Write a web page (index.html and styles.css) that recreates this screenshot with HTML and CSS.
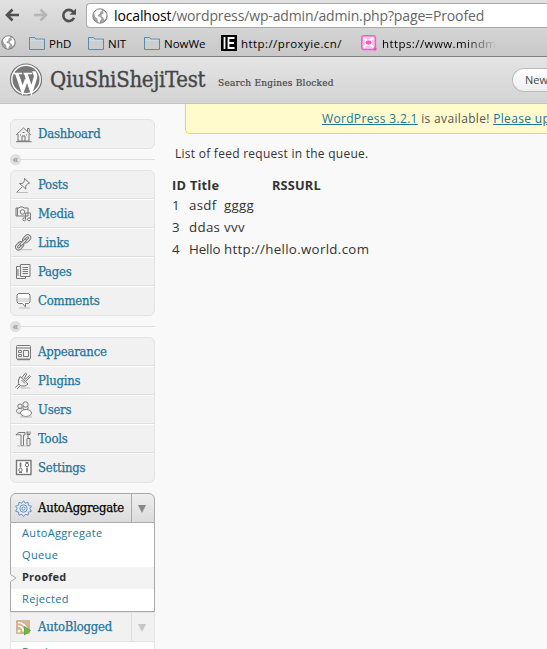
FILE: index.html
```
<!DOCTYPE html>
<html lang="en">
<head>
<meta charset="utf-8">
<title>QiuShiShejiTest</title>
<link rel="stylesheet" href="styles.css">
</head>
<body>
<svg class="defs" aria-hidden="true">
  <defs>
    <linearGradient id="fold" x1="0" y1="0" x2="0" y2="1"><stop offset="0" stop-color="#a9cbe0"/><stop offset="1" stop-color="#6fa3c4"/></linearGradient>
    <symbol id="globe" viewBox="0 0 16 16"><circle cx="8" cy="8" r="7.200" fill="#a4a4a4" stroke="#777" stroke-width=".9"/><path d="M2 5l3-3.200 4-.5 1 1.400-2.300 1.500.5 1.400-2 1.200-.6 1.400 2.300.5 1.700 1.900-1.200 1.600-.9 2.700-1.600-1.200-.4-3-2.200-1.600zM11 3l2 .8 1.500 3-.7 3.700-1.600 1.400-.8-2.400-1.800-1 .2-2.200 1.900-.8z" fill="#fff"/></symbol>
    <symbol id="folder" viewBox="0 0 16 14"><path d="M.5 13.500v-12h5.200l1.200 1.600h8.600v10.400z" fill="url(#fold)" stroke="#5b8cab"/><path d="M1.200 4.300h13.600" stroke="#c7deeb"/></symbol>
  </defs>
</svg>

<header class="browser">
  <div class="toolbar">
    <svg class="nav" width="15" height="14" viewBox="0 0 15 14"><path d="M14 7H2.500M7.500 1.500L2 7l5.500 5.500" fill="none" stroke="#505050" stroke-width="2.700"/></svg>
    <svg class="nav" width="15" height="14" viewBox="0 0 15 14"><path d="M1 7h11.500M7.500 1.500L13 7l-5.500 5.500" fill="none" stroke="#b5b5b5" stroke-width="2.500"/></svg>
    <svg class="nav" width="16" height="15" viewBox="0 0 16 15"><path d="M12.300 4A5.600 5.600 0 1 0 13 9.800" fill="none" stroke="#505050" stroke-width="2.600"/><path d="M15 .5v6.300H8.600z" fill="#505050"/></svg>
    <div class="omnibox"><svg width="16" height="16"><use href="#globe"/></svg><span class="url"><b>localhost</b>/wordpress/wp-admin/admin.php?page=Proofed</span></div>
  </div>
  <nav class="bookmarks">
    <svg class="bm-globe" width="15" height="15"><use href="#globe"/></svg>
    <span class="bm phd"><svg width="16" height="14"><use href="#folder"/></svg><span>PhD</span></span>
    <span class="bm nit"><svg width="16" height="14"><use href="#folder"/></svg><span>NIT</span></span>
    <span class="bm now"><svg width="16" height="14"><use href="#folder"/></svg><span>NowWe</span></span>
    <span class="bm proxy"><svg width="16" height="16" viewBox="0 0 16 16"><path d="M0 0h16v16H0z" fill="#000"/><path d="M3.500 2v12M13.500 3H7.500v10h6M7.500 8h5.500" fill="none" stroke="#fff" stroke-width="1.800"/></svg><span>http://proxyie.cn/</span></span>
    <span class="bm mind"><svg width="16" height="16" viewBox="0 0 16 16"><rect x=".8" y=".8" width="13.600" height="13.600" rx="2" fill="#ffc4ea" stroke="#f55fc0" stroke-width="1.500"/><path d="M2.500 2.500l3 3M12.500 2.500l-3 3M2.500 12.500l3-3M9.500 9.500l3 3" stroke="#fff" stroke-width="2"/><ellipse cx="7.600" cy="7.500" rx="3.500" ry="2.700" fill="#f55fc0" stroke="#fff"/><circle cx="14" cy="14" r="1.700" fill="#f24db8"/></svg><span class="fade">https://www.mindme</span></span>
  </nav>
</header>

<header class="site">
  <svg class="wp" width="34" height="34" viewBox="0 0 34 34"><circle cx="17" cy="16.500" r="15.500" fill="#fff" stroke="#777" stroke-width="1.200"/><circle cx="17" cy="16.500" r="13.500" fill="#787878"/><path d="M4.500 10.500h8.500M14.500 10.500h8.500" stroke="#fff" stroke-width="1.600"/><path d="M7.800 10.500l5.800 17L17.500 16.500M16.800 10.500l5.600 17 4.200-13.500c.7-2.200-1.700-3.600-1.400-5.700" fill="none" stroke="#fff" stroke-width="3.500"/></svg>
  <h1>QiuShiShejiTest</h1>
  <span class="blocked">Search Engines Blocked</span>
  <span class="newbtn">New</span>
</header>

<div class="body">
  <aside>
    <ul class="menu">
      <li><svg class="ic" viewBox="0 0 17 17"><path d="M1 9l7.500-7L16 9M3 8v7h11V8M12.500 5V2.500h1.700v4M1 15.700h15.500" /><path d="M7 15v-5h3v5M5 9h1M11 9h1M7.500 6.500h2"/></svg><a>Dashboard</a></li>
    </ul>
    <div class="sep"><i>«</i></div>
    <ul class="menu">
      <li><svg class="ic" viewBox="0 0 17 17"><path d="M9.500 1.500l5 4.500-1.800.6-2 2.500.2 3-6.400-5.600 3.200-.2 2-2.600zM7 10l-5 5"/><path d="M1 15.500h12" class="sh"/></svg><a>Posts</a></li>
      <li><svg class="ic" viewBox="0 0 17 17"><path d="M1 3h3l1-1h3l1 1h4v8H1zM2.500 3v8"/><circle cx="7.500" cy="7" r="2.300"/><path d="M10.500 14V8h5v6"/><circle cx="9.300" cy="14.300" r="1.500"/><circle cx="14" cy="14.300" r="1.500"/></svg><a>Media</a></li>
      <li><svg class="ic" viewBox="0 0 17 17"><g transform="rotate(-45 8.500 8)"><rect x="8.500" y="5" width="9" height="6" rx="3"/><rect x="-1.500" y="5" width="9" height="6" rx="3"/><rect x="10.500" y="7" width="5" height="2" rx="1"/><rect x=".5" y="7" width="5" height="2" rx="1"/><rect x="4" y="6.800" width="8" height="2.400" rx="1.200" fill="#f1f1f1"/></g><path d="M6 15.700h11" class="sh"/></svg><a>Links</a></li>
      <li><svg class="ic" viewBox="0 0 17 17"><path d="M5.500 1.500H15v12H5.500zM5.500 3.500h-4v12h9v-2M7.500 4.500H13M7.500 6.500H13M7.500 8.500H13M7.500 10.500H13M3 6v7"/></svg><a>Pages</a></li>
      <li><svg class="ic" viewBox="0 0 17 17"><path d="M3.500 1.500h10l1.500 1.500v7l-1.500 1.500h-3v3.500l-3-3.500h-4L2 10V3z" fill="#fff"/><path d="M3 6h11v4H3z" fill="#ddd" stroke="none"/><path d="M4 16h11" class="sh"/></svg><a>Comments</a></li>
    </ul>
    <div class="sep"><i>«</i></div>
    <ul class="menu">
      <li><svg class="ic" viewBox="0 0 17 17"><rect x="1.500" y="1.500" width="14" height="13.500" rx="1"/><path d="M2 4h13M8.500 6.500h5v6h-5zM3.500 6.500h3v2h-3zM3.500 10.500h3v2h-3z"/><path d="M2 15.700h13"/></svg><a>Appearance</a></li>
      <li><svg class="ic" viewBox="0 0 17 17"><path d="M5 4.500l8 7.500-3 2H6l-2.500-2.500V8zM6.500 6l4-5 1.200 1L9 7M10.500 9.500L15.500 4.500l-1-1-5 4.500M4 12L.3 15.500M5.500 13.500L2 17M6.500 8l3.500 3.500"/><path d="M6 16h9" class="sh"/></svg><a>Plugins</a></li>
      <li><svg class="ic" viewBox="0 0 17 17"><circle cx="5" cy="5.200" r="2.200"/><path d="M7 8c-3-1.500-5.500.2-5.500 2.200 0 1.600 2 2.300 4 2"/><circle cx="10.500" cy="3.500" r="2.700"/><path d="M8 5.500c-.5 2 .5 3.500 2.500 3.500s3-1.500 2.500-3.500"/><ellipse cx="11" cy="12" rx="5.500" ry="3.500" fill="#fff"/><path d="M5 16h12" class="sh"/></svg><a>Users</a></li>
      <li><svg class="ic" viewBox="0 0 17 17"><path d="M1 5c1-2 2.500-2.500 4-2.500h5V5H8.500v10.500H6V5C4 4.500 2.500 4.500 1 5zM13 1.500v7M12 8.500h3v7h-3zM12 1.500v3h3v-3"/><path d="M2 16h13" class="sh"/></svg><a>Tools</a></li>
      <li><svg class="ic" viewBox="0 0 17 17"><rect x="1.500" y="1.500" width="14.500" height="14" fill="#fff" stroke-width="1.400"/><path d="M5.500 3.500v5M12 13.500v-5" stroke-width="1.700"/><circle cx="5.500" cy="11" r="1.700"/><circle cx="12" cy="6" r="1.700"/><path d="M4 13.500h3M10.500 3.500h3"/></svg><a>Settings</a></li>
    </ul>
    <div class="open">
      <div class="head"><svg class="ic gear" viewBox="0 0 17 17"><path d="M8.500.8l1.700 2.400 2.900-.9.300 3 3 .9-1.500 2.500 1.500 2.600-3 .8-.3 3-2.900-.8-1.700 2.300-1.700-2.300-2.900.8-.3-3-3-.8 1.500-2.600L.6 6.200l3-.9.300-3 2.900.9z"/><circle cx="8.500" cy="8.500" r="3.700"/><circle cx="8.500" cy="8.500" r="1.600"/></svg><a class="w-agg">AutoAggregate</a><span class="toggle"><i></i></span></div>
      <ul class="sub">
        <li>AutoAggregate</li>
        <li>Queue</li>
        <li class="cur"><svg class="notch" width="7" height="8" viewBox="0 0 7 8"><path d="M0 0v8l6-4z" fill="#f9f9f9"/><path d="M.5.500L6 4 .5 7.500" fill="none" stroke="#aaa"/></svg>Proofed</li>
        <li>Rejected</li>
      </ul>
      <div class="head idle"><svg class="ic blog" viewBox="0 0 17 17"><rect x="1" y="1" width="14" height="14" rx="1" fill="#d3b391"/><circle cx="4" cy="12" r="1.500" fill="#fff"/><path d="M3 7c3 0 5.500 2.500 5.500 5.500M3 3.500c5 0 9 4 9 9" stroke="#fff" stroke-width="1.700"/><path d="M9.500 7.500l6 4-6 4.500z" fill="#6cbd45" stroke="#4b9b2e" stroke-width=".7"/></svg><a>AutoBlogged</a><span class="toggle"><i></i></span></div>
      <ul class="sub last"><li>Feeds</li></ul>
    </div>
  </aside>
  <main>
    <div class="notice"><a>WordPress 3.2.1</a> is available! <a>Please up</a></div>
    <p>List of feed request in the queue.</p>
    <table>
      <tr><th class="c1">ID</th><th class="c2">Title</th><th class="c3">RSSURL</th></tr>
      <tr><td>1</td><td>asdf</td><td>gggg</td></tr>
      <tr><td>3</td><td>ddas</td><td>vvv</td></tr>
      <tr><td>4</td><td class="tight">Hello</td><td>http://hello.world.com</td></tr>
    </table>
  </main>
</div>
</body>
</html>
```
FILE: styles.css
```
* { box-sizing: border-box; }
html, body { margin: 0; width: 547px; height: 649px; overflow: hidden; }
body { background: #f9f9f9; color: #333; font-family: "Open Sans", "Noto Sans", sans-serif; font-size: 12px; }
ul, h1, p { margin: 0; padding: 0; list-style: none; font-weight: normal; }
svg { flex: none; display: block; }
.defs { display: none; }

.browser { height: 57px; background: linear-gradient(#e1e1e1, #c8c8c8); border-bottom: 1px solid #808080; overflow: hidden; }
.toolbar { display: flex; height: 28px; padding: 3px 0 0 5px; }
.nav { margin: 5px 13px 0 0; }
.omnibox { display: flex; flex: 1; height: 25px; margin-left: -4px; padding: 4px 5px; background: #fff; border: 1px solid #aaa; border-right: 0; border-radius: 4px 0 0 4px; }
.url { margin-left: 6px; font-size: 14px; line-height: 15px; color: #666; white-space: nowrap; letter-spacing: -.14px; }
.url b { font-weight: normal; color: #000; }
.bookmarks { display: flex; height: 28px; padding: 7px 0 0 1px; color: #000; }
.bm-globe { margin-right: 13px; }
.bm { display: flex; flex: none; height: 16px; line-height: 17px; font-size: 11.5px; white-space: nowrap; }
.bm > svg { margin-right: 4px; }
.bm svg[height="14"] { margin-top: 1px; }
.phd { width: 59px; }
.nit { width: 56px; }
.now { width: 77px; }
.proxy { width: 140px; letter-spacing: .42px; }
.mind { letter-spacing: .42px; }
.mind > svg { margin-right: 5px; }
.fade { width: 116px; overflow: hidden; -webkit-mask-image: linear-gradient(90deg, #000 72%, transparent 99%); mask-image: linear-gradient(90deg, #000 72%, transparent 99%); }

.site { display: flex; height: 47px; padding: 6px 0 0 9px; background: linear-gradient(#e4e4e4, #d4d4d4); border-bottom: 1px solid #c3c3c3; color: #464646; overflow: hidden; font-family: "DejaVu Serif Condensed", "DejaVu Serif", serif; font-stretch: condensed; }
.site > * { flex: none; white-space: nowrap; }
.site h1 { width: 158px; margin-left: 7px; font-size: 22px; line-height: 33px; letter-spacing: -.3px; -webkit-text-stroke: .35px currentColor; }
.blocked { width: 294px; margin-left: 10px; font-size: 10px; line-height: 39px; letter-spacing: .22px; -webkit-text-stroke: .2px currentColor; }
.site .newbtn { flex: 1; height: 24px; margin-top: 5px; padding-left: 12px; border: 1px solid #bbb; border-right: 0; border-radius: 12px 0 0 12px; background: linear-gradient(#fff, #eee); font: 11px/22px "Open Sans", sans-serif; }

.body { display: flex; height: 545px; overflow: hidden; }
aside { flex: none; width: 145px; margin: 15px 0 0 10px; }
.menu { border: 1px solid #e3e3e3; border-radius: 6px; background: #f1f1f1; }
.menu li, .head { display: flex; height: 29px; padding-left: 4px; border-top: 1px solid #fff; border-bottom: 1px solid #e0e0e0; }
.menu li:first-child { height: 28px; border-top-color: transparent; }
.menu li:last-child { border-bottom: 0; height: 29px; }
.menu li:first-child:last-child { height: 28px; }
.ic { width: 17px; height: 17px; margin: 5px 6px 0 0; fill: none; stroke: #777; stroke-width: 1; }
.ic .sh { stroke: #bbb; }
.ic.gear { stroke: #6f8fc4; fill: #e3ebf7; margin-top: 6px; }
.ic.blog { stroke: none; margin-top: 6px; }
aside a { color: #21759b; font: condensed 13px/28px "DejaVu Serif Condensed", "DejaVu Serif", serif; letter-spacing: -.22px; -webkit-text-stroke: .25px currentColor; }
.menu li:first-child a { line-height: 26px; }
.sep { display: flex; align-items: center; height: 21px; }
.sep::after { content: ""; flex: 1; height: 1px; background: #dfdfdf; }
.sep i { width: 11px; height: 11px; border-radius: 50%; background: #dfdfdf; color: #888; font: 11px/9px "Open Sans", sans-serif; text-align: center; }
.open { margin-top: 10px; }
.head { height: 30px; border: 1px solid #aaa; border-radius: 6px 6px 0 0; background: linear-gradient(#eee, #dcdcdc); }
.head .w-agg { color: #000; letter-spacing: -.3px; }
.toggle { width: 23px; margin-left: auto; padding: 11px 0 0 6px; border-left: 1px solid #aaa; }
.toggle i { display: block; width: 0; border: 4.5px solid transparent; border-top: 8px solid #888; border-bottom: 0; }
.idle { border-color: #e3e3e3; border-radius: 0; background: #f1f1f1; }
.idle .toggle { border-color: #ddd; }
.idle .toggle i { border-top-color: #c6c6c6; }
.sub { height: 89px; background: #fff; border: 1px solid #aaa; border-top: 0; }
.sub li { position: relative; height: 22px; padding-left: 11px; font-size: 11px; line-height: 20px; letter-spacing: .35px; color: #21759b; }
.sub .cur { background: #f3f3f3; color: #333; font-weight: bold; letter-spacing: .15px; }
.notch { position: absolute; left: -1px; top: 7px; }
.sub.last { border-color: #e3e3e3; }

main { flex: 1; min-width: 0; padding-left: 17px; }
.notice { height: 30px; margin-left: 13px; border: 1px solid #e6db55; border-width: 0 0 1px 1px; border-radius: 0 0 0 5px; background: #fffbcc; padding-left: 136px; line-height: 29px; white-space: nowrap; letter-spacing: .33px; color: #555; }
.notice a { color: #21759b; text-decoration: underline; }
main p { margin: 11px 0 0 3px; line-height: 18px; letter-spacing: .26px; }
table { margin-top: 14px; margin-left: -2px; border-collapse: collapse; font-size: 13.3px; line-height: 22px; table-layout: fixed; width: 202px; white-space: nowrap; letter-spacing: .32px; }
th, td { padding: 0 0 0 2px; text-align: left; height: 22px; }
th { height: 17px; line-height: 16px; padding-bottom: 1px; font-size: 12.8px; letter-spacing: .15px; }
th.c2 { padding-left: 3px; }
.c1 { width: 17px; }
.c2 { width: 35px; }
.tight { letter-spacing: -.1px; }
th.c3 { padding-left: 50px; }
```
